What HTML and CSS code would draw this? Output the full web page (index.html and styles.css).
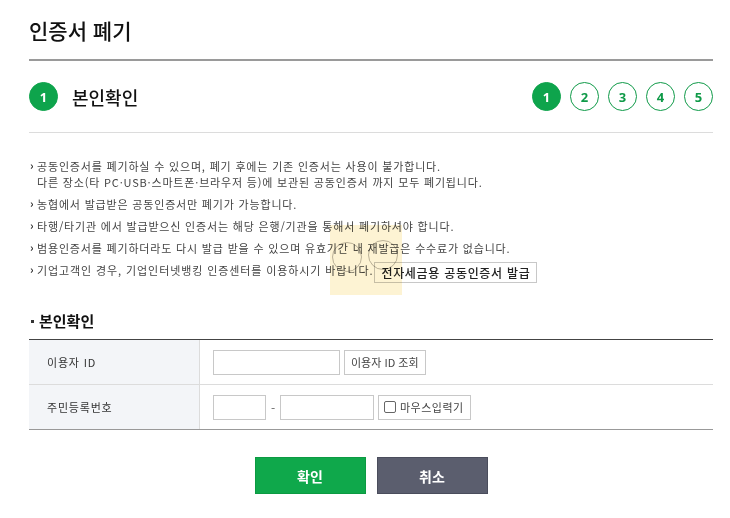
FILE: index.html
```html
<!DOCTYPE html>
<html lang="ko">
<head>
<meta charset="utf-8">
<link rel="stylesheet" href="styles.css">
</head>
<body>
<div class="page">
  <h1 class="title">인증서 폐기</h1>
  <div class="steps">
    <div class="current">
      <span class="dot on">1</span>
      <span class="step-name">본인확인</span>
    </div>
    <div class="dots">
      <span class="dot on">1</span>
      <span class="dot">2</span>
      <span class="dot">3</span>
      <span class="dot">4</span>
      <span class="dot">5</span>
    </div>
  </div>
  <ul class="notes">
    <li>공동인증서를 폐기하실 수 있으며, 폐기 후에는 기존 인증서는 사용이 불가합니다.<br>다른 장소(타 PC·USB·스마트폰·브라우저 등)에 보관된 공동인증서 까지 모두 폐기됩니다.</li>
    <li>농협에서 발급받은 공동인증서만 폐기가 가능합니다.</li>
    <li>타행/타기관 에서 발급받으신 인증서는 해당 은행/기관을 통해서 폐기하셔야 합니다.</li>
    <li>범용인증서를 폐기하더라도 다시 발급 받을 수 있으며 유효기간 내 재발급은 수수료가 없습니다.</li>
    <li class="with-btn">기업고객인 경우, 기업인터넷뱅킹 인증센터를 이용하시기 바랍니다. <button class="btn-small strong">전자세금용 공동인증서 발급</button></li>
  </ul>
  <h2 class="sub">본인확인</h2>
  <div class="form">
    <div class="row">
      <div class="th">이용자 ID</div>
      <div class="td">
        <input class="inp w127" type="text">
        <button class="btn-small">이용자 ID 조회</button>
      </div>
    </div>
    <div class="row">
      <div class="th">주민등록번호</div>
      <div class="td">
        <input class="inp w53" type="text">
        <span class="dash">-</span>
        <input class="inp w94" type="text">
        <button class="btn-small check"><span class="box"></span>마우스입력기</button>
      </div>
    </div>
  </div>
  <div class="actions">
    <button class="btn-big ok">확인</button>
    <button class="btn-big cancel">취소</button>
  </div>
  <div class="mark">
    <span class="ring r1"></span>
    <span class="ring r2"></span>
  </div>
</div>
</body>
</html>
```
FILE: styles.css
```css
* { box-sizing: border-box; }
body {
  margin: 0;
  background: #fff;
  font-family: "Noto Sans CJK KR", "Noto Sans", sans-serif;
  color: #222;
}
.page {
  position: relative;
  width: 713px;
  padding: 12px 0 0 29px;
}
.title {
  margin: 0;
  font-size: 21px;
  font-weight: 500;
  line-height: 36px;
  padding-bottom: 11px;
  border-bottom: 2px solid #9a9a9a;
  color: #111;
}
.steps {
  display: flex;
  justify-content: space-between;
  align-items: center;
  height: 72px;
  border-bottom: 1px solid #dcdcdc;
}
.current { display: flex; align-items: center; gap: 14px; }
.step-name { font-size: 18px; font-weight: 500; color: #111; }
.dots { display: flex; gap: 9px; }
.dot {
  width: 29px;
  height: 29px;
  border-radius: 50%;
  border: 1.5px solid #0f9a48;
  color: #0f9a48;
  display: flex;
  align-items: center;
  justify-content: center;
  font-size: 13px;
  font-weight: 700;
  font-family: "Noto Sans", sans-serif;
}
.dot.on { background: #0ea44c; border-color: #0ea44c; color: #fff; }
.notes {
  list-style: none;
  margin: 0;
  padding: 25px 0 0;
  font-size: 11px;
  line-height: 16px;
  color: #444;
}
.notes li {
  position: relative;
  padding-left: 8px;
  margin-bottom: 6px;
  letter-spacing: 0.82px;
}
.notes li::before {
  content: "›";
  position: absolute;
  left: 1px;
  top: -1px;
  font-weight: 700;
  color: #333;
}
.notes li.with-btn { letter-spacing: 0.9px; }
.btn-small {
  font-family: inherit;
  font-size: 11px;
  height: 22px;
  padding: 0 6px;
  background: #fff;
  border: 1px solid #c8c8c8;
  color: #444;
  vertical-align: middle;
  cursor: pointer;
}
.btn-small.strong {
  font-size: 12px;
  font-weight: 500;
  color: #222;
  letter-spacing: 0.7px;
  height: 21px;
  margin-left: -3px;
  padding: 0 6px;
}
.sub {
  margin: 26px 0 0;
  font-size: 15px;
  font-weight: 700;
  line-height: 24px;
  position: relative;
  padding-left: 10px;
  color: #111;
}
.sub::before {
  content: "";
  position: absolute;
  left: 2px;
  top: 11px;
  width: 3px;
  height: 3px;
  background: #333;
}
.form {
  margin-top: 6px;
  border-top: 1px solid #444;
  border-bottom: 1px solid #999;
}
.row { display: flex; height: 44px; }
.row + .row { border-top: 1px solid #dcdcdc; height: 45px; }
.th {
  width: 171px;
  background: #f3f5f8;
  border-right: 1px solid #dcdcdc;
  display: flex;
  align-items: center;
  padding-left: 18px;
  font-size: 11px;
  letter-spacing: 0.8px;
  color: #333;
}
.td { display: flex; align-items: center; padding-left: 13px; }
.inp {
  height: 25px;
  border: 1px solid #c8c8c8;
  background: #fff;
  padding: 0 4px;
}
.w127 { width: 127px; }
.w53 { width: 53px; }
.w94 { width: 94px; }
.dash { width: 14px; text-align: center; font-size: 12px; color: #666; }
.td .btn-small { height: 25px; margin-left: 4px; }
.btn-small.check {
  width: 93px;
  display: flex;
  align-items: center;
  gap: 4px;
  padding: 0 5px;
  letter-spacing: 0.5px;
}
.box { width: 12px; height: 12px; border: 1px solid #666; border-radius: 2px; }
.actions {
  display: flex;
  justify-content: center;
  gap: 11px;
  margin-top: 27px;
}
.btn-big {
  width: 111px;
  height: 37px;
  font-family: inherit;
  font-size: 14px;
  font-weight: 700;
  color: #fff;
  border: 1px solid transparent;
}
.ok { background: #0fa84b; border-color: #0c9a42; }
.cancel { background: #5b5e6e; border-color: #4a4d5c; }
.mark {
  position: absolute;
  left: 330px;
  top: 225px;
  width: 72px;
  height: 70px;
  background: rgba(250, 222, 130, 0.35);
  mix-blend-mode: multiply;
}
.ring {
  position: absolute;
  width: 30px;
  height: 30px;
  border: 1px solid rgba(120, 110, 90, 0.5);
  border-radius: 50%;
}
.r1 { left: 2px; top: 17px; }
.r2 { left: 38px; top: 15px; }
```
